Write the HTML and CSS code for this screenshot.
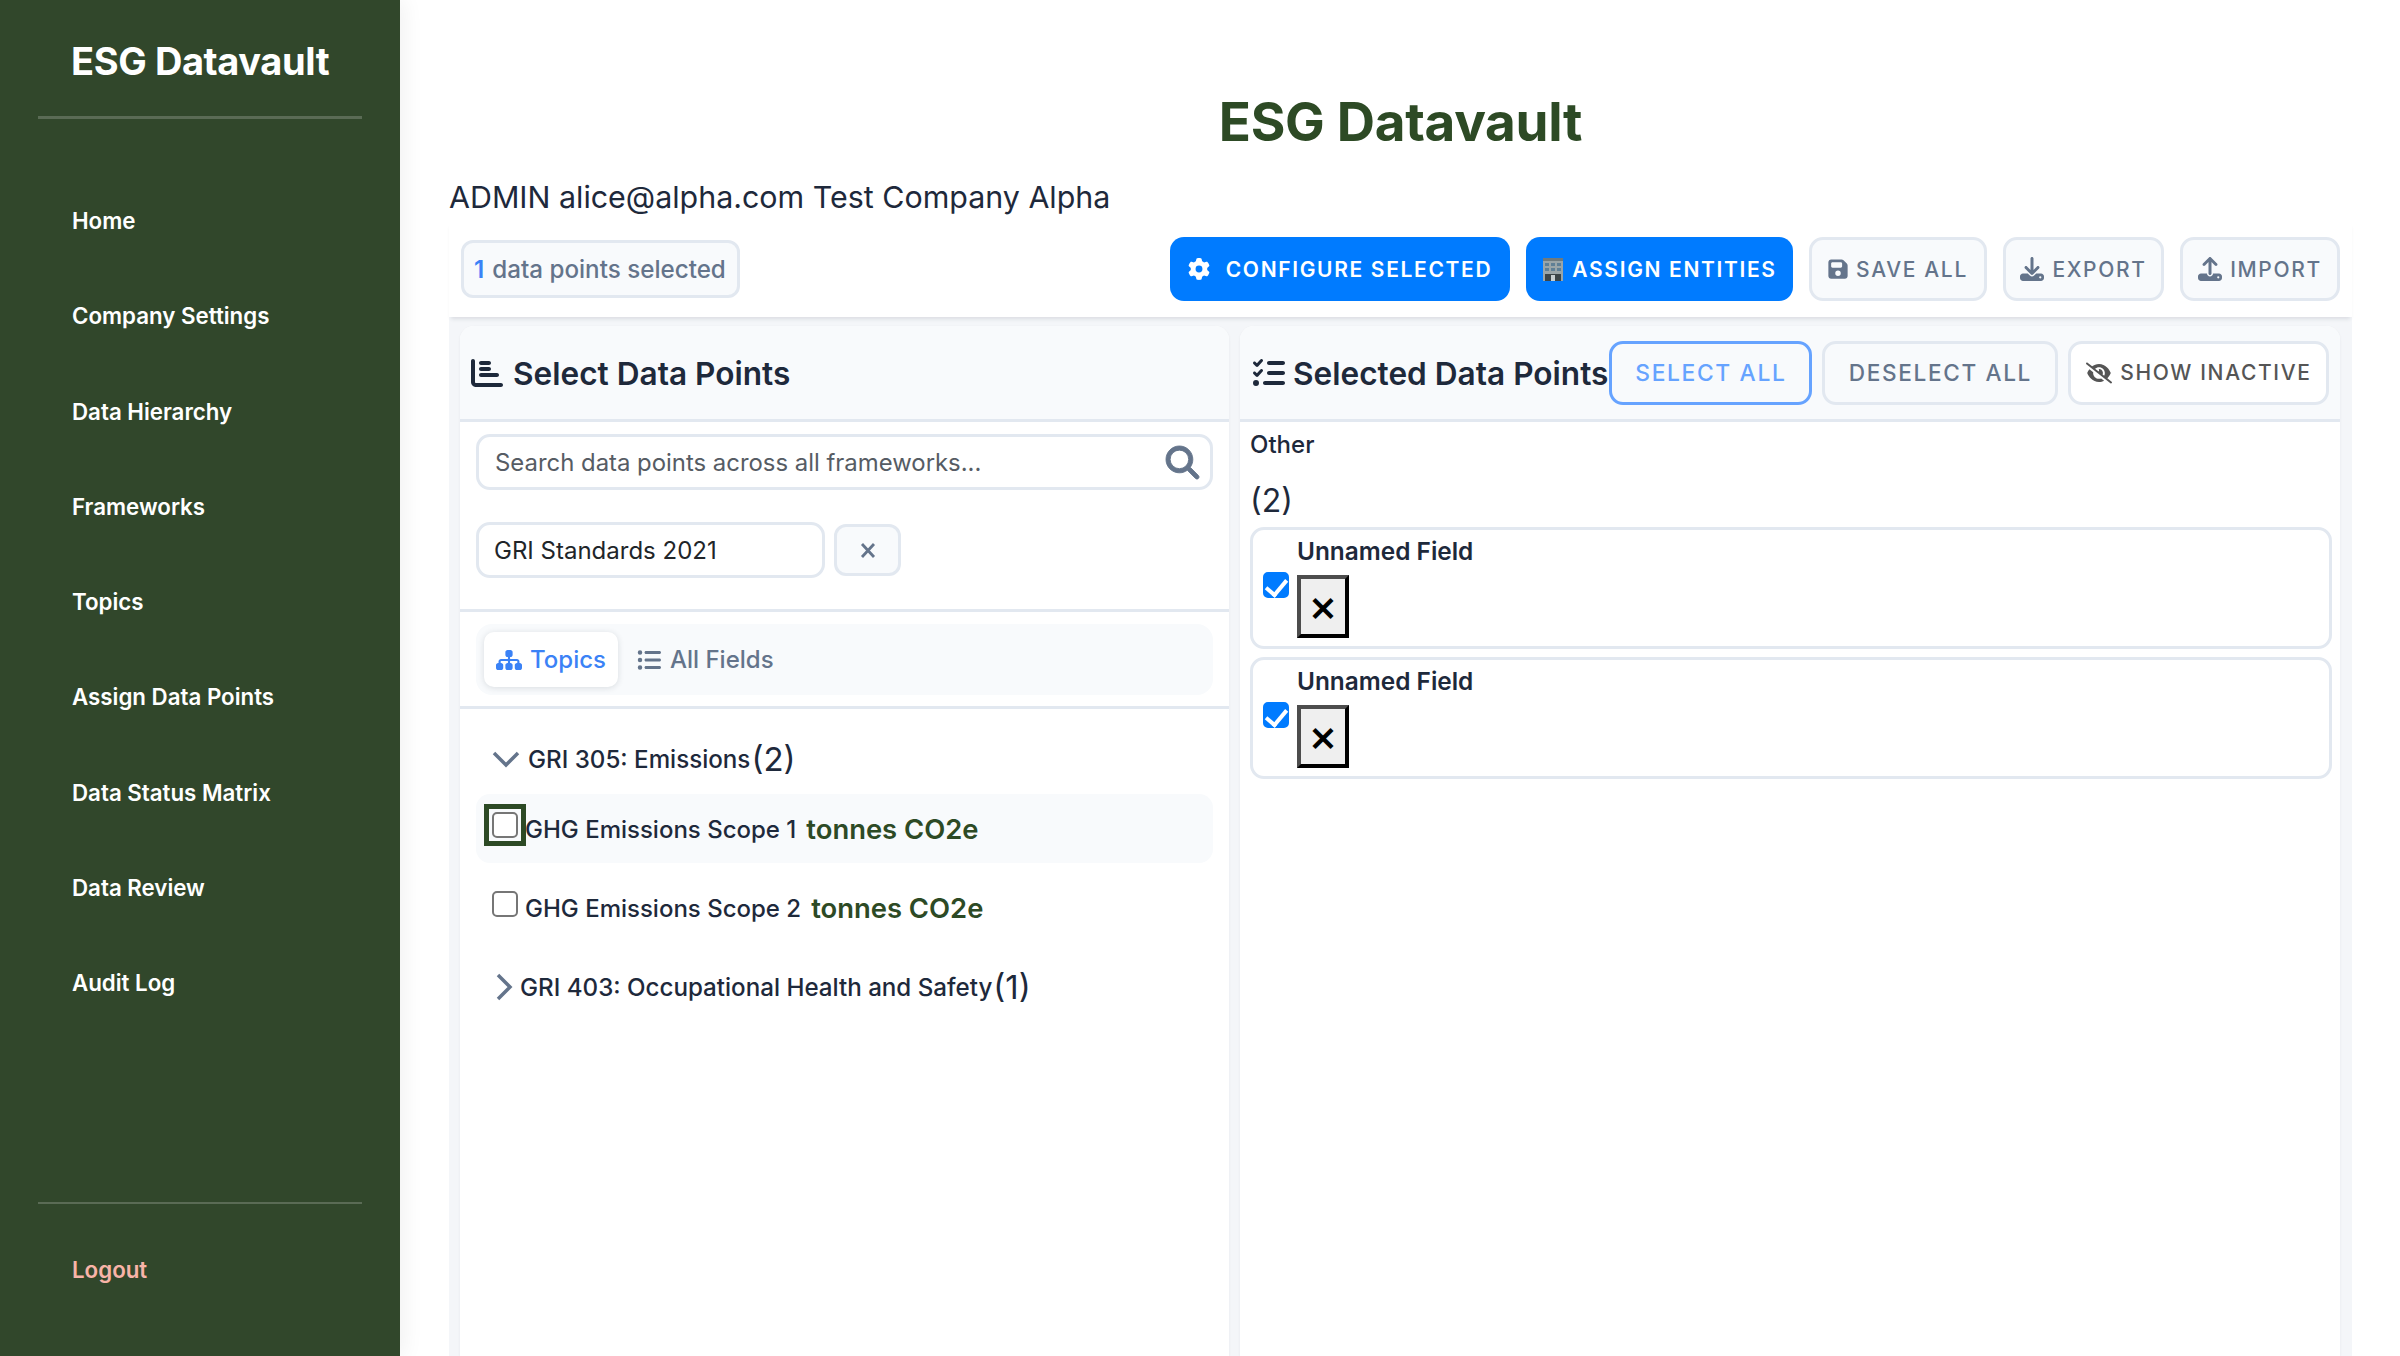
FILE: index.html
```html
<!DOCTYPE html>
<html lang="en">
<head>
<meta charset="utf-8">
<title>ESG Datavault</title>
<link rel="stylesheet" href="styles.css">
</head>
<body>
<aside class="sidebar">
  <div class="brand">ESG Datavault</div>
  <nav class="nav">
    <a class="nav-link">Home</a>
    <a class="nav-link">Company Settings</a>
    <a class="nav-link">Data Hierarchy</a>
    <a class="nav-link">Frameworks</a>
    <a class="nav-link">Topics</a>
    <a class="nav-link">Assign Data Points</a>
    <a class="nav-link">Data Status Matrix</a>
    <a class="nav-link">Data Review</a>
    <a class="nav-link">Audit Log</a>
  </nav>
  <div class="side-foot"><a class="logout">Logout</a></div>
</aside>
<main class="main">
  <h1 class="title">ESG Datavault</h1>
  <p class="user">ADMIN alice@alpha.com Test Company Alpha</p>
  <div class="toolbar">
    <div class="count"><b>1</b> data points selected</div>
    <div class="actions">
      <button class="btn primary cfg"><svg class="ico" viewBox="0 0 512 512"><path d="M495.9 166.6c3.2 8.7 .5 18.4-6.4 24.6l-43.3 39.4c1.1 8.3 1.7 16.8 1.7 25.4s-.6 17.1-1.7 25.4l43.3 39.4c6.9 6.2 9.6 15.9 6.4 24.6c-4.4 11.9-9.7 23.3-15.8 34.3l-4.7 8.1c-6.6 11-14 21.4-22.1 31.2c-5.9 7.2-15.7 9.6-24.5 6.8l-55.7-17.7c-13.4 10.3-28.2 18.9-44 25.4l-12.5 57.1c-2 9.1-9 16.3-18.2 17.8c-13.8 2.3-28 3.5-42.5 3.5s-28.7-1.2-42.5-3.5c-9.2-1.5-16.2-8.7-18.2-17.8l-12.5-57.1c-15.8-6.5-30.6-15.1-44-25.4L83.1 425.9c-8.8 2.8-18.6 .3-24.5-6.8c-8.1-9.8-15.5-20.2-22.1-31.2l-4.7-8.1c-6.1-11-11.4-22.4-15.8-34.3c-3.2-8.7-.5-18.4 6.4-24.6l43.3-39.4C64.6 273.1 64 264.6 64 256s.6-17.1 1.7-25.4L22.4 191.2c-6.9-6.2-9.6-15.9-6.4-24.6c4.4-11.9 9.7-23.3 15.8-34.3l4.7-8.1c6.6-11 14-21.4 22.1-31.2c5.9-7.2 15.7-9.6 24.5-6.8l55.7 17.7c13.4-10.3 28.2-18.9 44-25.4l12.5-57.1c2-9.1 9-16.3 18.2-17.8C227.3 1.2 241.5 0 256 0s28.7 1.2 42.5 3.5c9.2 1.5 16.2 8.7 18.2 17.8l12.5 57.1c15.8 6.5 30.6 15.1 44 25.4l55.7-17.7c8.8-2.8 18.6-.3 24.5 6.8c8.1 9.8 15.5 20.2 22.1 31.2l4.7 8.1c6.1 11 11.4 22.4 15.8 34.3zM256 336a80 80 0 1 0 0-160 80 80 0 1 0 0 160z"/></svg><span>CONFIGURE SELECTED</span></button>
      <button class="btn primary asg"><svg class="bld" viewBox="0 0 22 24"><rect x="1" y="1" width="20" height="23" fill="#9aa5a8"/><rect x="1" y="1" width="20" height="3" fill="#6f7a7d"/><g fill="#5f7f95"><rect x="3" y="6" width="4" height="3"/><rect x="9" y="6" width="4" height="3"/><rect x="15" y="6" width="4" height="3"/><rect x="3" y="11" width="4" height="3"/><rect x="9" y="11" width="4" height="3"/><rect x="15" y="11" width="4" height="3"/></g><rect x="3" y="17" width="16" height="7" fill="#3c4548"/><rect x="9" y="18" width="4" height="6" fill="#c7ced0"/></svg><span>ASSIGN ENTITIES</span></button>
      <button class="btn plain b-save"><svg class="ico ico-s" viewBox="0 0 448 512"><path d="M64 32C28.7 32 0 60.7 0 96V416c0 35.3 28.7 64 64 64H384c35.3 0 64-28.7 64-64V173.3c0-17-6.7-33.3-18.7-45.3L352 50.7C340 38.7 323.7 32 306.7 32H64zm0 96c0-17.7 14.3-32 32-32H288c17.7 0 32 14.3 32 32v64c0 17.7-14.3 32-32 32H96c-17.7 0-32-14.3-32-32V128zM224 288a64 64 0 1 1 0 128 64 64 0 1 1 0-128z"/></svg><span>SAVE ALL</span></button>
      <button class="btn plain b-export"><svg class="ico ico-m" viewBox="0 0 512 512"><path d="M288 32c0-17.7-14.3-32-32-32s-32 14.3-32 32V274.7l-73.4-73.4c-12.5-12.5-32.8-12.5-45.3 0s-12.5 32.8 0 45.3l128 128c12.5 12.5 32.8 12.5 45.3 0l128-128c12.5-12.5 12.5-32.8 0-45.3s-32.8-12.5-45.3 0L288 274.7V32zM64 352c-35.3 0-64 28.7-64 64v32c0 35.3 28.7 64 64 64H448c35.3 0 64-28.7 64-64V416c0-35.3-28.7-64-64-64H346.5l-45.3 45.3c-25 25-65.5 25-90.5 0L165.5 352H64zm368 56a24 24 0 1 1 0 48 24 24 0 1 1 0-48z"/></svg><span>EXPORT</span></button>
      <button class="btn plain b-import"><svg class="ico ico-m" viewBox="0 0 512 512"><path d="M288 109.3V352c0 17.7-14.3 32-32 32s-32-14.3-32-32V109.3l-73.4 73.4c-12.5 12.5-32.8 12.5-45.3 0s-12.5-32.8 0-45.3l128-128c12.5-12.5 32.8-12.5 45.3 0l128 128c12.5 12.5 12.5 32.8 0 45.3s-32.8 12.5-45.3 0L288 109.3zM64 352H192c0 35.3 28.7 64 64 64s64-28.7 64-64H448c35.3 0 64 28.7 64 64v32c0 35.3-28.7 64-64 64H64c-35.3 0-64-28.7-64-64V416c0-35.3 28.7-64 64-64zM432 456a24 24 0 1 0 0-48 24 24 0 1 0 0 48z"/></svg><span>IMPORT</span></button>
    </div>
  </div>
  <div class="panels">
    <section class="panel left">
      <header class="panel-head">
        <svg class="head-ico" viewBox="0 0 512 512"><path d="M32 32c17.7 0 32 14.3 32 32V400c0 8.8 7.2 16 16 16H480c17.7 0 32 14.3 32 32s-14.3 32-32 32H80c-44.2 0-80-35.8-80-80V64C0 46.3 14.3 32 32 32zm96 64c0-17.7 14.3-32 32-32l128 0c17.7 0 32 14.3 32 32s-14.3 32-32 32l-128 0c-17.7 0-32-14.3-32-32zm32 64H288c17.7 0 32 14.3 32 32s-14.3 32-32 32H160c-17.7 0-32-14.3-32-32s14.3-32 32-32zm0 96H416c17.7 0 32 14.3 32 32s-14.3 32-32 32H160c-17.7 0-32-14.3-32-32s14.3-32 32-32z"/></svg>
        <h2 class="panel-title">Select Data Points</h2>
      </header>
      <div class="filters">
        <div class="search">
          <span class="search-text">Search data points across all frameworks...</span>
          <svg class="search-ico" viewBox="0 0 512 512"><path d="M416 208c0 45.9-14.9 88.3-40 122.7L502.6 457.4c12.5 12.5 12.5 32.8 0 45.3s-32.8 12.5-45.3 0L330.7 376c-34.4 25.2-76.8 40-122.7 40C93.1 416 0 322.9 0 208S93.1 0 208 0S416 93.1 416 208zM208 352a144 144 0 1 0 0-288 144 144 0 1 0 0 288z"/></svg>
        </div>
        <div class="fw-row">
          <div class="fw-select">GRI Standards 2021</div>
          <button class="fw-clear"><svg viewBox="0 0 16 16"><path d="M2 1.5l12 13M14 1.5l-12 13"/></svg></button>
        </div>
      </div>
      <div class="tabs-wrap">
        <div class="tabs">
          <div class="tab active"><svg class="tab-ico" viewBox="0 0 576 512"><path d="M208 80c0-26.5 21.5-48 48-48h64c26.5 0 48 21.5 48 48v64c0 26.5-21.5 48-48 48h-8v40H464c30.9 0 56 25.1 56 56v32h8c26.5 0 48 21.5 48 48v64c0 26.5-21.5 48-48 48H464c-26.5 0-48-21.5-48-48V368c0-26.5 21.5-48 48-48h8V288c0-4.4-3.6-8-8-8H312v40h8c26.5 0 48 21.5 48 48v64c0 26.5-21.5 48-48 48H256c-26.5 0-48-21.5-48-48V368c0-26.5 21.5-48 48-48h8V280H112c-4.4 0-8 3.6-8 8v32h8c26.5 0 48 21.5 48 48v64c0 26.5-21.5 48-48 48H48c-26.5 0-48-21.5-48-48V368c0-26.5 21.5-48 48-48h8V288c0-30.9 25.1-56 56-56H264V192h-8c-26.5 0-48-21.5-48-48V80z"/></svg>Topics</div>
          <div class="tab"><svg class="tab-ico" viewBox="0 0 512 512"><path d="M64 144a48 48 0 1 0 0-96 48 48 0 1 0 0 96zM192 64c-17.7 0-32 14.3-32 32s14.3 32 32 32H480c17.7 0 32-14.3 32-32s-14.3-32-32-32H192zm0 160c-17.7 0-32 14.3-32 32s14.3 32 32 32H480c17.7 0 32-14.3 32-32s-14.3-32-32-32H192zm0 160c-17.7 0-32 14.3-32 32s14.3 32 32 32H480c17.7 0 32-14.3 32-32s-14.3-32-32-32H192zM64 464a48 48 0 1 0 0-96 48 48 0 1 0 0 96zm48-208a48 48 0 1 0-96 0 48 48 0 1 0 96 0z"/></svg>All Fields</div>
        </div>
      </div>
      <div class="tree">
        <div class="topic open">
          <svg class="chev-down" viewBox="0 0 28 18"><path d="M2 3l12 12L26 3"/></svg>
          <span class="topic-label"><span class="topic-name">GRI 305: Emissions</span><span class="topic-count">(2)</span></span>
        </div>
        <div class="point hover">
          <span class="cb-ring"><input class="cb" type="checkbox"></span>
          <span class="point-name">GHG Emissions Scope 1</span>
          <span class="unit">tonnes CO2e</span>
        </div>
        <div class="point">
          <input class="cb" type="checkbox">
          <span class="point-name">GHG Emissions Scope 2</span>
          <span class="unit">tonnes CO2e</span>
        </div>
        <div class="topic closed">
          <svg class="chev-right" viewBox="0 0 18 28"><path d="M3 2l12 12L3 26"/></svg>
          <span class="topic-label"><span class="topic-name">GRI 403: Occupational Health and Safety</span><span class="topic-count">(1)</span></span>
        </div>
      </div>
    </section>
    <section class="panel right">
      <header class="panel-head head-right">
        <svg class="head-ico" viewBox="0 0 512 512"><path d="M152.1 38.2c9.9 8.9 10.7 24 1.8 33.9l-72 80c-4.4 4.9-10.6 7.8-17.2 7.9s-12.9-2.4-17.6-7L7 113C-2.3 103.6-2.3 88.4 7 79s24.6-9.4 33.9 0l22.1 22.1 55.1-61.2c8.9-9.9 24-10.7 33.9-1.8zm0 160c9.9 8.9 10.7 24 1.8 33.9l-72 80c-4.4 4.9-10.6 7.8-17.2 7.9s-12.9-2.4-17.6-7L7 273c-9.4-9.4-9.4-24.6 0-33.9s24.6-9.4 33.9 0l22.1 22.1 55.1-61.2c8.9-9.9 24-10.7 33.9-1.8zM224 96c0-17.7 14.3-32 32-32H480c17.7 0 32 14.3 32 32s-14.3 32-32 32H256c-17.7 0-32-14.3-32-32zm0 160c0-17.7 14.3-32 32-32H480c17.7 0 32 14.3 32 32s-14.3 32-32 32H256c-17.7 0-32-14.3-32-32zM160 416c0-17.7 14.3-32 32-32H480c17.7 0 32 14.3 32 32s-14.3 32-32 32H192c-17.7 0-32-14.3-32-32zM48 368a48 48 0 1 1 0 96 48 48 0 1 1 0-96z"/></svg>
        <h2 class="panel-title nowrap">Selected Data Points</h2>
        <div class="head-actions">
          <button class="btn small sel">SELECT ALL</button>
          <button class="btn small plain desel">DESELECT ALL</button>
          <button class="btn small inactive"><svg class="ico ico-e" viewBox="0 0 640 512"><path d="M38.8 5.1C28.4-3.1 13.3-1.2 5.1 9.2S-1.2 34.7 9.2 42.9l592 464c10.4 8.2 25.5 6.3 33.7-4.1s6.3-25.5-4.1-33.7L525.6 386.7c39.6-40.6 66.4-86.1 79.9-118.4c3.3-7.9 3.3-16.7 0-24.6c-14.9-35.7-46.2-87.7-93-131.1C465.5 68.8 400.8 32 320 32c-68.2 0-125 26.3-169.3 60.8L38.8 5.1zM223.1 149.5C248.6 126.2 282.7 112 320 112c79.5 0 144 64.5 144 144c0 24.9-6.3 48.3-17.4 68.7L408 294.5c8.4-19.3 10.6-41.4 4.8-63.3c-11.1-41.5-47.8-69.4-88.6-71.1c-5.8-.2-9.2 6.1-7.4 11.7c2.1 6.4 3.3 13.2 3.3 20.3c0 10.2-2.4 19.8-6.6 28.3l-90.3-70.8zM373 389.9c-16.4 6.5-34.3 10.1-53 10.1c-79.5 0-144-64.5-144-144c0-6.9 .5-13.6 1.4-20.2L83.1 161.5C60.3 191.2 44 220.8 34.5 243.7c-3.3 7.9-3.3 16.7 0 24.6c14.9 35.7 46.2 87.7 93 131.1C174.5 443.2 239.2 480 320 480c47.8 0 89.9-12.9 126.2-32.5L373 389.9z"/></svg><span>SHOW INACTIVE</span></button>
        </div>
      </header>
      <div class="selected">
        <div class="group-name">Other</div>
        <div class="group-count">(2)</div>
        <div class="sel-item">
          <input class="cb cb-sel" type="checkbox" checked>
          <div class="sel-body">
            <div class="sel-name">Unnamed Field</div>
            <button class="x-btn">×</button>
          </div>
        </div>
        <div class="sel-item">
          <input class="cb cb-sel" type="checkbox" checked>
          <div class="sel-body">
            <div class="sel-name">Unnamed Field</div>
            <button class="x-btn">×</button>
          </div>
        </div>
      </div>
    </section>
  </div>
</main>
</body>
</html>
```

FILE: styles.css
```css
* { box-sizing: border-box; }
html, body { margin: 0; height: 100%; }
body {
  display: flex;
  height: 1356px;
  overflow: hidden;
  font-family: Inter, "Liberation Sans", sans-serif;
  color: #1e293b;
  background: #fff;
}
button { font-family: inherit; }

/* Sidebar */
.sidebar {
  width: 400px;
  flex: none;
  display: flex;
  flex-direction: column;
  background: #31472b;
  box-shadow: 4px 0 20px rgba(0,0,0,.06);
  color: #fff;
  padding: 0 38px;
}
.brand {
  height: 119px;
  padding: 37px 0 0 33px;
  border-bottom: 3px solid rgba(255,255,255,.2);
  font-size: 38px;
  line-height: 48px;
  font-weight: 700;
  letter-spacing: -.4px;
}
.nav {
  display: flex;
  flex-direction: column;
  padding: 54px 0 0 34px;
  flex: 1;
}
.nav-link {
  height: 95.3px;
  line-height: 95px;
  font-size: 22.3px;
  font-weight: 600;
}
.side-foot {
  height: 154px;
  border-top: 2px solid rgba(255,255,255,.2);
  padding: 44px 0 0 34px;
}
.logout {
  font-size: 22.3px;
  line-height: 44px;
  font-weight: 600;
  color: #f8b4a8;
}

/* Main */
.main {
  flex: 1;
  min-width: 0;
  display: flex;
  flex-direction: column;
  padding: 0 48px 0 49px;
}
.title {
  margin: 87px 0 0;
  text-align: center;
  font-size: 53px;
  line-height: 70px;
  font-weight: 700;
  letter-spacing: -.3px;
  color: #2d4a25;
}
.user {
  margin: 16px 0 0;
  font-size: 30.4px;
  line-height: 48px;
  color: #1e293b;
}
.toolbar {
  display: flex;
  justify-content: space-between;
  align-items: center;
  height: 96px;
  padding: 0 12px;
  position: relative;
  background: #fff;
  box-shadow: 0 4px 4px -2px rgba(30,41,59,.12);
  z-index: 1;
}
.count {
  display: flex;
  align-items: center;
  gap: 8px;
  height: 58px;
  padding: 0 11px 0 10px;
  background: #f8fafc;
  border: 3px solid #e2e8f0;
  border-radius: 12px;
  color: #64748b;
  font-size: 24.2px;
  font-weight: 500;
}
.count b { color: #3b82f6; font-weight: 600; }
.actions { display: flex; gap: 16px; }
.btn {
  display: inline-flex;
  align-items: center;
  justify-content: center;
  height: 64px;
  gap: 8px;
  padding: 0;
  border-radius: 14px;
  font-size: 21px;
  font-weight: 600;
  letter-spacing: 1.65px;
  white-space: nowrap;
}
.primary { background: #007bff; border: 0; color: #fff; }
.plain { background: #f8fafc; border: 3px solid #e2e8f0; color: #64748b; font-weight: 500; }
.cfg { width: 340px; gap: 16px; }
.asg { width: 267px; gap: 8px; }
.b-save { width: 178px; }
.b-export { width: 161px; }
.b-import { width: 160px; }
.ico { fill: currentColor; height: 22px; width: 22px; flex: none; }
.ico-s { width: 20px; }
.ico-m { width: 24px; height: 24px; }
.ico-e { width: 26px; }
.bld { width: 22px; height: 24px; flex: none; }

/* Panels */
.panels {
  flex: 1;
  min-height: 0;
  display: flex;
  gap: 11px;
  padding: 9px 12px 0 11px;
  background: #f4f6f9;
}
.panel {
  background: #fff;
  border-radius: 14px 14px 0 0;
  box-shadow: 0 1px 3px rgba(30,41,59,.06);
  display: flex;
  flex-direction: column;
}
.left { width: 769px; flex: none; }
.right { flex: 1; min-width: 0; }
.panel-head {
  display: flex;
  align-items: center;
  gap: 10px;
  height: 96px;
  flex: none;
  padding: 0 11px;
  background: #f8fafc;
  border-bottom: 3px solid #e2e8f0;
  border-radius: 14px 14px 0 0;
}
.head-ico { width: 32px; height: 32px; fill: #1e293b; flex: none; }
.head-right { gap: 8px; padding: 0 13px; }
.panel-title {
  margin: 2px 0 0;
  font-size: 31.6px;
  line-height: 40px;
  font-weight: 600;
  color: #1e293b;
}
.nowrap { white-space: nowrap; }
.head-actions { display: flex; gap: 10px; margin-left: -7px; }
.small { font-weight: 500; }
.sel { width: 203px; font-size: 22.8px; background: #f8fafc; border: 3px solid #66a3ff; color: #66a3ff; }
.desel { width: 236px; font-size: 22.6px; }
.inactive { width: 261px; font-size: 21px; background: #fff; border: 3px solid #e2e8f0; color: #555; gap: 8px; }

/* Left filters */
.filters {
  flex: none;
  padding: 12px 16px 0;
  height: 190px;
  border-bottom: 3px solid #e2e8f0;
}
.search {
  display: flex;
  align-items: center;
  justify-content: space-between;
  height: 56px;
  padding: 0 16px;
  background: #fff;
  border: 3px solid #e2e8f0;
  border-radius: 14px;
}
.search-text { font-size: 23.9px; color: #565c64; }
.search-ico { width: 33px; height: 33px; fill: #64748b; stroke: #64748b; stroke-width: 14; margin-right: -5px; overflow: visible; }
.fw-row { display: flex; align-items: center; gap: 9px; margin-top: 32px; }
.fw-select {
  display: flex;
  align-items: center;
  width: 349px;
  height: 56px;
  padding: 0 15px;
  background: #fff;
  border: 3px solid #e2e8f0;
  border-radius: 14px;
  font-size: 24px;
  color: #212529;
}
.fw-clear {
  display: flex;
  align-items: center;
  justify-content: center;
  width: 67px;
  height: 52px;
  padding: 0;
  background: #f8fafc;
  border: 3px solid #e2e8f0;
  border-radius: 12px;
}
.fw-clear svg { width: 16px; height: 17px; fill: none; stroke: #64748b; stroke-width: 2.8; }

/* Tabs */
.tabs-wrap {
  flex: none;
  height: 97px;
  padding: 12px 16px 0;
  border-bottom: 3px solid #e2e8f0;
}
.tabs {
  display: flex;
  align-items: center;
  gap: 6px;
  height: 71px;
  padding: 0 8px;
  background: #f8fafc;
  border-radius: 16px;
}
.tab {
  display: flex;
  align-items: center;
  gap: 8px;
  height: 55px;
  padding: 0 12px;
  border-radius: 10px;
  font-size: 24px;
  font-weight: 500;
  color: #64748b;
}
.tab.active {
  background: #fff;
  color: #3b82f6;
  box-shadow: 0 1px 6px rgba(30,41,59,.14);
}
.tab-ico { width: 26px; height: 24px; fill: currentColor; flex: none; }

/* Tree */
.tree { padding: 19px 16px 0; flex: 1; }
.topic {
  display: flex;
  align-items: center;
  height: 62px;
  font-size: 24.15px;
  font-weight: 500;
  color: #1e293b;
}
.open { padding-left: 16px; gap: 8px; }
.closed { padding-left: 19px; gap: 7px; margin-top: 14px; }
.chev-down { width: 28px; height: 18px; fill: none; stroke: #64748b; stroke-width: 3.5; flex: none; }
.chev-right { width: 18px; height: 28px; fill: none; stroke: #64748b; stroke-width: 3.5; flex: none; }
.topic-label { display: flex; align-items: center; white-space: nowrap; }
.topic-count { font-size: 33px; font-weight: 400; margin-left: 1px; }
.point {
  display: flex;
  align-items: center;
  gap: 7px;
  height: 69px;
  margin-top: 4px;
  padding: 0 16px;
  border-radius: 14px;
  font-size: 24px;
  font-weight: 500;
}
.point + .point { margin-top: 10px; }
.hover { background: #f8fafc; }
.cb {
  appearance: none;
  width: 26px;
  height: 26px;
  margin: 0;
  flex: none;
  background: #fff;
  border: 2px solid #767676;
  border-radius: 5px;
}
.cb:checked { background: #007bff; border-color: #007bff; display: flex; justify-content: center; }
.cb:checked::after {
  content: "";
  width: 9px;
  height: 17px;
  margin-top: 1px;
  border: solid #fff;
  border-width: 0 4px 4px 0;
  transform: rotate(40deg);
}
.cb-ring {
  display: block;
  flex: none;
  width: 26px;
  height: 26px;
  outline: 5px solid #2d4a25;
  outline-offset: 3px;
  position: relative;
  top: -4px;
}
.cb-ring .cb { display: block; }
.point > .cb { position: relative; top: -4px; }
.point-name { position: relative; top: 1px; color: #1e293b; }
.unit { font-size: 27.4px; font-weight: 600; color: #2d4a25; margin-left: 3px; }

/* Selected */
.selected { padding: 0 8px 0 10px; flex: 1; }
.group-name {
  font-size: 24px;
  font-weight: 500;
  line-height: 30px;
  margin-top: 8px;
}
.group-count {
  font-size: 32px;
  line-height: 40px;
  margin: 21px 0 0;
  height: 46px;
}
.sel-item {
  display: flex;
  align-items: flex-start;
  gap: 8px;
  height: 122px;
  margin-bottom: 8px;
  padding: 3px 0 0 10px;
  background: #fff;
  border: 3px solid #e2e8f0;
  border-radius: 14px;
}
.cb-sel { margin-top: 39px; }
.sel-body { display: flex; flex-direction: column; align-items: flex-start; }
.sel-name { font-size: 24.4px; font-weight: 600; line-height: 36px; color: #1e293b; }
.x-btn {
  width: 52px;
  height: 63px;
  margin-top: 6px;
  padding: 0 0 3px;
  background: #efefef;
  border-style: solid;
  border-width: 4px;
  border-color: #4d4d4d #000 #000 #4d4d4d;
  color: #000;
  font-size: 44px;
  line-height: 1;
  font-weight: 500;
}
```
